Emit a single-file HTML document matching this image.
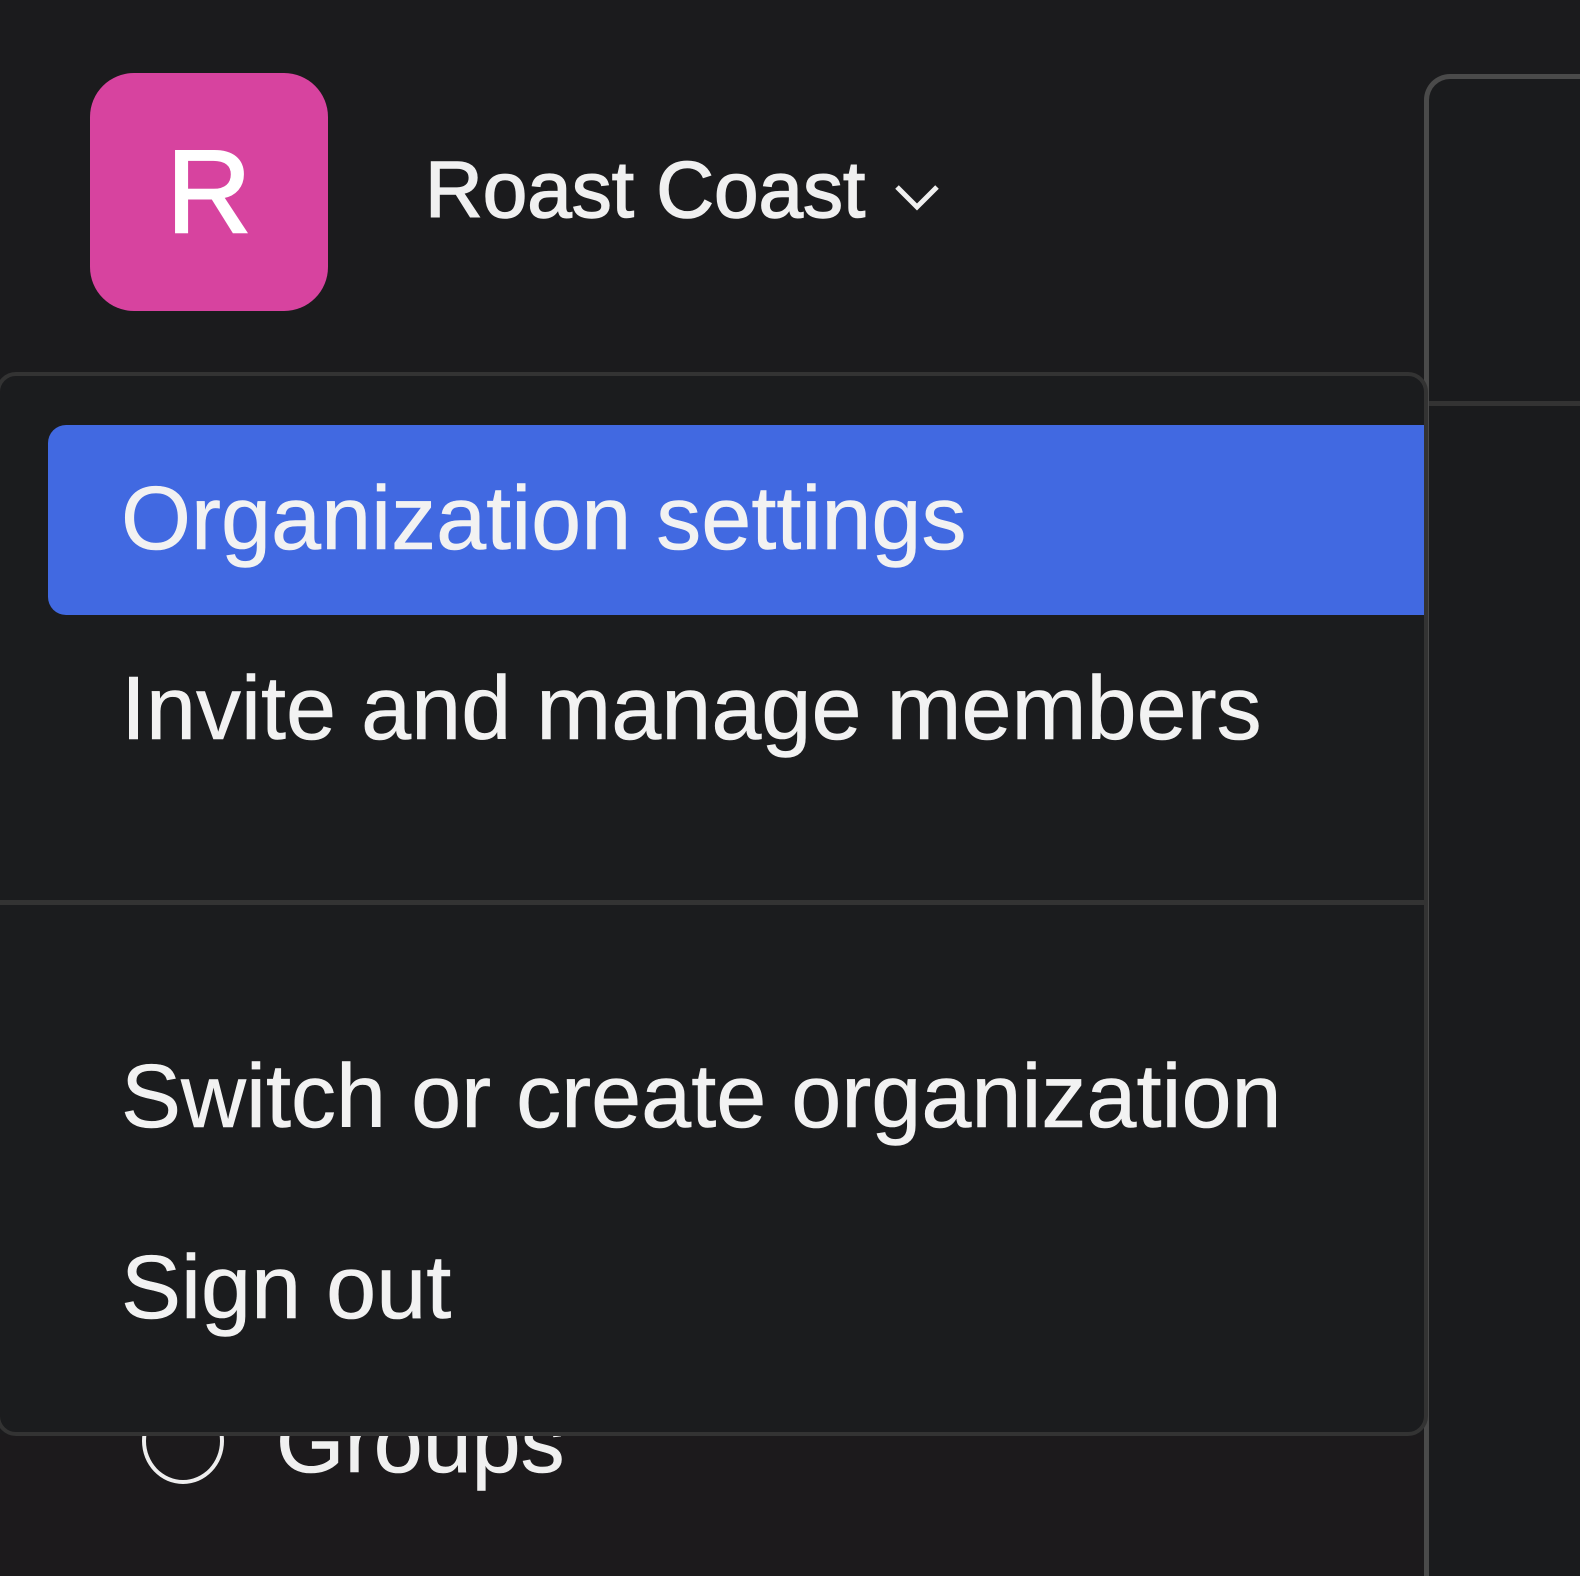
<!DOCTYPE html>
<html><head><meta charset="utf-8"><style>
html,body{margin:0;padding:0;width:1580px;height:1576px;overflow:hidden;}
body{background:#1b1b1d;position:relative;font-family:"Liberation Sans",sans-serif;color:#f0f0f0;}
.logo{position:absolute;left:90px;top:73px;width:238px;height:238px;border-radius:44px;background:#d7439f;color:#fff;font-size:118px;text-align:center;line-height:238px;-webkit-text-stroke:2px #fff;}
.title{position:absolute;left:425px;top:145px;font-size:80px;line-height:90px;-webkit-text-stroke:1.5px #f0f0f0;white-space:nowrap;}
.right{position:absolute;left:1424px;top:74px;width:156px;height:1502px;border:5px solid #4a4a4a;border-right:none;border-bottom:none;border-radius:26px 0 0 0;background:#1a1b1d;box-sizing:border-box;}
.rline{position:absolute;left:1429px;top:401px;width:151px;height:5px;background:#333;}
.bg2{position:absolute;left:0;top:1434px;width:1424px;height:142px;background:#1c1a1c;}
.groups{position:absolute;left:276px;top:1392px;font-size:88px;line-height:100px;white-space:nowrap;-webkit-text-stroke:0.6px #f0f0f0;}
.circ{position:absolute;left:142px;top:1398px;width:74px;height:78px;border:4px solid #eee;border-radius:50%;}
.menu{position:absolute;left:-4px;top:372px;width:1432px;height:1064px;border:4px solid #333;border-radius:20px;background:#1b1c1e;box-sizing:border-box;}
.hl{position:absolute;left:48px;top:425px;width:1376px;height:190px;background:#4169e1;border-radius:18px 0 0 18px;}
.sep{position:absolute;left:0;top:900px;width:1424px;height:5px;background:#333;}
.it{position:absolute;left:121px;font-size:90px;line-height:100px;white-space:nowrap;color:#f2f2f2;-webkit-text-stroke:0.6px #f2f2f2;}
</style></head><body>
<div class="right"></div>
<div class="rline"></div>
<div class="bg2"></div>
<div class="circ"></div>
<div class="groups">Groups</div>
<div class="logo">R</div>
<div class="title">Roast Coast <svg width="48" height="30" viewBox="0 0 48 30" style="vertical-align:middle;margin-left:6px"><path d="M4 6 L24 26 L44 6" fill="none" stroke="#f0f0f0" stroke-width="5"/></svg></div>
<div class="menu"></div>
<div class="hl"></div>
<div class="sep"></div>
<div class="it" style="top:469px">Organization settings</div>
<div class="it" style="top:659px">Invite and manage members</div>
<div class="it" style="top:1047px">Switch or create organization</div>
<div class="it" style="top:1238px">Sign out</div>
</body></html>
